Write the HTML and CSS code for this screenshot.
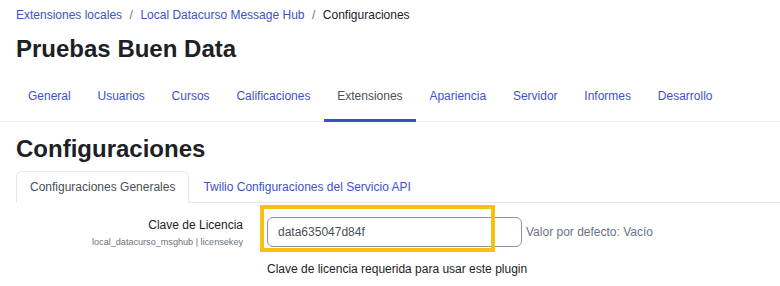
FILE: index.html
```html
<!DOCTYPE html>
<html lang="es">
<head>
  <meta charset="UTF-8" />
  <meta name="viewport" content="width=device-width, initial-scale=1.0" />
  <title>Configuraciones</title>
  <link rel="stylesheet" href="styles.css">
</head>
<body>

<div class="page-head">
  <ol class="breadcrumb">
    <li><a href="#">Extensiones locales</a></li>
    <li class="sep">/</li>
    <li><a href="#">Local Datacurso Message Hub</a></li>
    <li class="sep">/</li>
    <li class="current">Configuraciones</li>
  </ol>
  <h1 class="site-title">Pruebas Buen Data</h1>
</div>

<nav class="main-nav">
  <a href="#">General</a>
  <a href="#">Usuarios</a>
  <a href="#">Cursos</a>
  <a href="#">Calificaciones</a>
  <a href="#" class="active">Extensiones</a>
  <a href="#">Apariencia</a>
  <a href="#">Servidor</a>
  <a href="#">Informes</a>
  <a href="#">Desarrollo</a>
</nav>

<div class="content">
  <h2 class="page-title">Configuraciones</h2>

  <div class="tabs">
    <a href="#" class="tab active">Configuraciones Generales</a>
    <a href="#" class="tab">Twilio Configuraciones del Servicio API</a>
  </div>

  <div class="setting">
    <div class="setting-label">
      <label for="licensekey">Clave de Licencia</label>
      <span class="shortname">local_datacurso_msghub | licensekey</span>
    </div>
    <div class="setting-field">
      <div class="field-row">
        <input type="text" id="licensekey" value="data635047d84f">
        <span class="default">Valor por defecto: Vacío</span>
      </div>
      <div class="highlight"></div>
      <p class="desc">Clave de licencia requerida para usar este plugin</p>
    </div>
  </div>
</div>

</body>
</html>
```

FILE: styles.css
```css
body {
  margin: 0;
  font-family: "Liberation Sans", Arial, sans-serif;
  font-size: 12px;
  color: #1d2125;
  background: #fff;
}
a {
  color: #3d52c6;
  text-decoration: none;
}
.page-head {
  padding: 0 16px;
}
.breadcrumb {
  display: flex;
  margin: 0;
  padding: 6px 0 0;
  list-style: none;
  line-height: 18px;
}
.breadcrumb .sep {
  color: #6a737b;
  padding: 0 7.5px;
}
.breadcrumb .current {
  color: #1d2125;
}
.site-title {
  margin: 10px 0 0;
  font-size: 24px;
  line-height: 30px;
  font-weight: bold;
}

/* top navigation */
.main-nav {
  display: flex;
  margin-top: 9px;
  padding-left: 14.6px;
  border-bottom: 1px solid #ececec;
}
.main-nav a {
  padding: 14px 13.4px;
  line-height: 18px;
  border-bottom: 3px solid transparent;
  margin-bottom: -1px;
}
.main-nav a.active {
  color: #495057;
  border-bottom-color: #3a4fc9;
}

.content {
  padding-left: 16px;
}
.page-title {
  margin: 12px 0 0;
  font-size: 24px;
  line-height: 30px;
  font-weight: bold;
}

/* settings tabs */
.tabs {
  display: flex;
  margin-top: 7px;
  border-bottom: 1px solid #e6e6e6;
}
.tab {
  padding: 6px 13px;
  line-height: 18px;
  border: 1px solid transparent;
  border-radius: 6px 6px 0 0;
  margin-bottom: -1px;
}
.tab.active {
  color: #495057;
  border-color: #e6e6e6 #e6e6e6 #fff;
}

/* setting row */
.setting {
  display: grid;
  grid-template-columns: 227px auto;
  column-gap: 24px;
  margin-top: 13px;
}
.setting-label {
  display: flex;
  flex-direction: column;
  align-items: flex-end;
}
.setting-label label {
  line-height: 18px;
}
.shortname {
  margin-top: 2px;
  font-size: 9.1px;
  line-height: 12px;
  color: #6a737b;
}
.setting-field {
  position: relative;
  padding-top: 1px;
}
.field-row {
  display: flex;
  align-items: center;
}
.field-row input {
  box-sizing: border-box;
  width: 255px;
  height: 30px;
  padding: 0 10px;
  border: 1px solid #8f959e;
  border-radius: 6px;
  font-family: "Liberation Sans", Arial, sans-serif;
  font-size: 12px;
  color: #495057;
}
.default {
  margin-left: 4px;
  color: #6a737b;
}
.desc {
  margin: 13px 0 0;
  line-height: 18px;
}
.highlight {
  position: absolute;
  left: -7px;
  top: -11px;
  width: 235px;
  height: 47px;
  box-sizing: border-box;
  border: 4px solid #f5c212;
}
```
